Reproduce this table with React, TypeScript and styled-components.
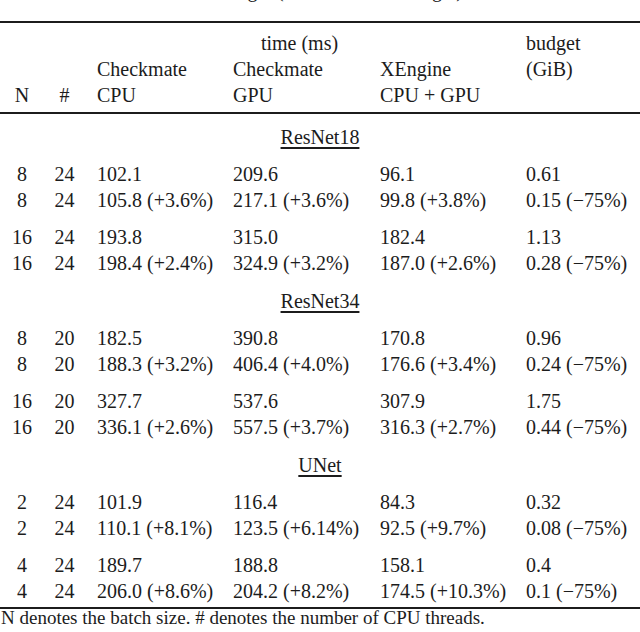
import React from "react";
import styled, { createGlobalStyle } from "styled-components";

const Global = createGlobalStyle`
  html, body { margin: 0; padding: 0; background: #ffffff; }
  body {
    font-family: "Liberation Serif", "Times New Roman", Times, "DejaVu Serif", serif;
    color: #1c1c1c;
    overflow: hidden;
  }
`;

const Page = styled.div`
  width: 640px;
  height: 632px;
  overflow: hidden;
  font-family: "Liberation Serif", "Times New Roman", Times, "DejaVu Serif", serif;
`;

const Caption = styled.div`
  margin-top: -21px;
  height: 22px;
  line-height: 22px;
  font-size: 20px;
  text-align: center;
  white-space: nowrap;
  margin-bottom: 20px;
`;

const Table = styled.div`
  border-top: 2px solid #1c1c1c;
  border-bottom: 2px solid #1c1c1c;
  font-size: 20px;
`;

const Head = styled.div`
  padding: 7px 0 4px;
  border-bottom: 2px solid #1c1c1c;
`;

const Row = styled.div`
  display: grid;
  grid-template-columns: 44px 41px 136px 147px 146px 1fr;
  height: 26px;
  line-height: 26px;
  white-space: nowrap;
`;

const Num = styled.div`
  text-align: center;
`;

const Cell = styled.div<{ $span?: number; $center?: boolean }>`
  padding-left: ${(p) => (p.$center ? 0 : 12)}px;
  grid-column: ${(p) => (p.$span ? `span ${p.$span}` : "auto")};
  text-align: ${(p) => (p.$center ? "center" : "left")};
`;

const Body = styled.div`
  padding: 10px 0 3px;
`;

const Section = styled.div`
  margin-top: 12px;
  &:first-child {
    margin-top: 0;
  }
`;

const Title = styled.div`
  height: 26px;
  line-height: 26px;
  text-align: center;
  span {
    text-decoration: underline;
    text-decoration-thickness: 1.5px;
    text-underline-offset: 3px;
  }
`;

const Group = styled.div`
  margin-top: 11px;
`;

const Note = styled.div`
  font-size: 19px;
  line-height: 17px;
  white-space: nowrap;
  padding-left: 1px;
`;

type DataRow = [string, string, string, string, string, string];

const sections: { name: string; groups: DataRow[][] }[] = [
  {
    name: "ResNet18",
    groups: [
      [
        ["8", "24", "102.1", "209.6", "96.1", "0.61"],
        ["8", "24", "105.8 (+3.6%)", "217.1 (+3.6%)", "99.8 (+3.8%)", "0.15 (\u221275%)"],
      ],
      [
        ["16", "24", "193.8", "315.0", "182.4", "1.13"],
        ["16", "24", "198.4 (+2.4%)", "324.9 (+3.2%)", "187.0 (+2.6%)", "0.28 (\u221275%)"],
      ],
    ],
  },
  {
    name: "ResNet34",
    groups: [
      [
        ["8", "20", "182.5", "390.8", "170.8", "0.96"],
        ["8", "20", "188.3 (+3.2%)", "406.4 (+4.0%)", "176.6 (+3.4%)", "0.24 (\u221275%)"],
      ],
      [
        ["16", "20", "327.7", "537.6", "307.9", "1.75"],
        ["16", "20", "336.1 (+2.6%)", "557.5 (+3.7%)", "316.3 (+2.7%)", "0.44 (\u221275%)"],
      ],
    ],
  },
  {
    name: "UNet",
    groups: [
      [
        ["2", "24", "101.9", "116.4", "84.3", "0.32"],
        ["2", "24", "110.1 (+8.1%)", "123.5 (+6.14%)", "92.5 (+9.7%)", "0.08 (\u221275%)"],
      ],
      [
        ["4", "24", "189.7", "188.8", "158.1", "0.4"],
        ["4", "24", "206.0 (+8.6%)", "204.2 (+8.2%)", "174.5 (+10.3%)", "0.1 (\u221275%)"],
      ],
    ],
  },
];

export default function App() {
  return (
    <Page>
      <Global />
      <Caption>Half budget (relative to full budget)</Caption>
      <Table>
        <Head>
          <Row>
            <Num />
            <Num />
            <Cell $span={3} $center>
              time (ms)
            </Cell>
            <Cell>budget</Cell>
          </Row>
          <Row>
            <Num />
            <Num />
            <Cell>Checkmate</Cell>
            <Cell>Checkmate</Cell>
            <Cell>XEngine</Cell>
            <Cell>(GiB)</Cell>
          </Row>
          <Row>
            <Num>N</Num>
            <Num>#</Num>
            <Cell>CPU</Cell>
            <Cell>GPU</Cell>
            <Cell>CPU + GPU</Cell>
            <Cell />
          </Row>
        </Head>
        <Body>
          {sections.map((s) => (
            <Section key={s.name}>
              <Title>
                <span>{s.name}</span>
              </Title>
              {s.groups.map((g, gi) => (
                <Group key={gi}>
                  {g.map((r, ri) => (
                    <Row key={ri}>
                      <Num>{r[0]}</Num>
                      <Num>{r[1]}</Num>
                      <Cell>{r[2]}</Cell>
                      <Cell>{r[3]}</Cell>
                      <Cell>{r[4]}</Cell>
                      <Cell>{r[5]}</Cell>
                    </Row>
                  ))}
                </Group>
              ))}
            </Section>
          ))}
        </Body>
      </Table>
      <Note>N denotes the batch size. # denotes the number of CPU threads.</Note>
    </Page>
  );
}
